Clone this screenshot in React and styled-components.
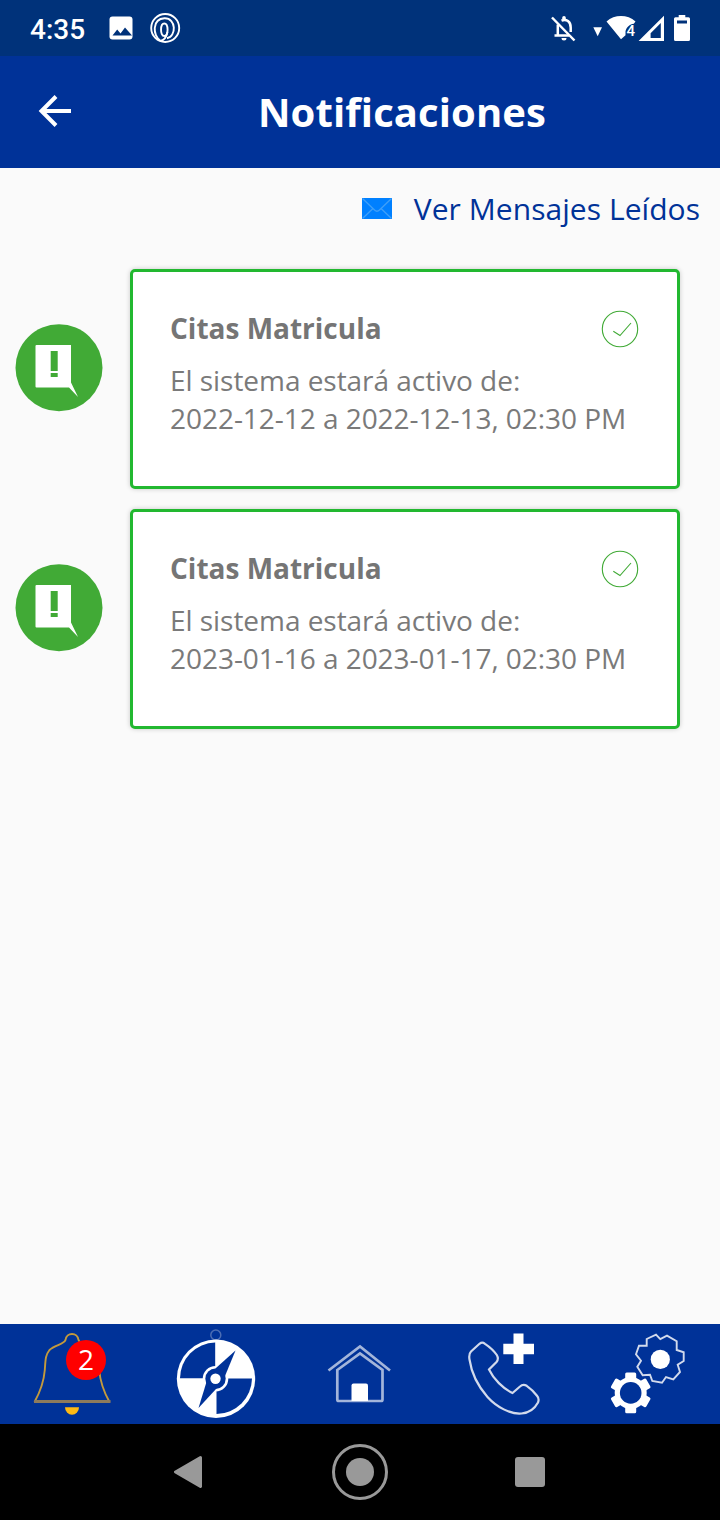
import React from "react";
import styled, { createGlobalStyle } from "styled-components";

const GlobalStyle = createGlobalStyle`
  * {
    box-sizing: border-box;
  }
  body {
    margin: 0;
    background: #fafafa;
    font-family: "Open Sans", "Noto Sans", sans-serif;
  }
  svg {
    display: block;
    flex-shrink: 0;
  }
`;

const Screen = styled.div`
  display: flex;
  flex-direction: column;
  width: 720px;
  height: 1520px;
  overflow: hidden;
  background: #fafafa;
`;

const StatusBar = styled.div`
  display: flex;
  align-items: center;
  justify-content: space-between;
  height: 56px;
  padding: 0 28px 0 30px;
  background: #00327a;
`;

const StatusGroup = styled.div`
  display: flex;
  align-items: center;
`;

const Clock = styled.span`
  width: 78px;
  padding-top: 4px;
  font-family: Roboto, sans-serif;
  font-size: 28px;
  font-weight: 500;
  line-height: 32px;
  color: #fff;
`;

const Header = styled.header`
  display: flex;
  align-items: center;
  height: 112px;
  background: #003298;
`;

const BackButton = styled.button`
  width: 84px;
  height: 112px;
  padding: 0;
  border: 0;
  background: none;
`;

const PageTitle = styled.h1`
  flex: 1;
  margin: 0;
  font-size: 40px;
  font-weight: 700;
  letter-spacing: 0.1px;
  line-height: 54px;
  text-align: center;
  color: #fff;
`;

const Content = styled.main`
  flex: 1;
`;

const ReadLink = styled.a`
  display: flex;
  align-items: center;
  justify-content: flex-end;
  gap: 22px;
  height: 81px;
  padding-right: 20px;
  font-size: 30px;
  letter-spacing: 0.05px;
  line-height: 40px;
  color: #003298;
`;

const MessageList = styled.div`
  display: flex;
  flex-direction: column;
  gap: 20px;
  padding: 20px 40px 0 15px;
`;

const MessageRow = styled.div`
  display: flex;
  align-items: center;
  height: 220px;
`;

const AlertSlot = styled.div`
  width: 115px;
  padding-bottom: 23px;
`;

const Card = styled.article`
  flex: 1;
  height: 220px;
  padding: 37px 38px 0 37px;
  border: 3px solid #22b830;
  border-radius: 5px;
  background: #fff;
  box-shadow: 0 0 5px rgba(0, 0, 0, 0.2);
`;

const CardHeader = styled.div`
  display: flex;
  align-items: center;
  justify-content: space-between;
  height: 40px;
  margin-bottom: 12px;
`;

const CardTitle = styled.h2`
  margin: 0;
  padding-bottom: 2px;
  font-size: 28px;
  font-weight: 700;
  line-height: 38px;
  color: #757575;
`;

const CardText = styled.p`
  margin: 0;
  font-size: 28px;
  letter-spacing: -0.04px;
  line-height: 38px;
  white-space: nowrap;
  color: #7a7a7a;
`;

const TabBar = styled.nav`
  display: grid;
  grid-template-columns: repeat(5, 144px);
  height: 100px;
  background: #003298;
`;

const Tab = styled.div`
  position: relative;
  height: 100px;
`;

const Badge = styled.span`
  position: absolute;
  top: 16px;
  left: 66px;
  width: 40px;
  height: 40px;
  border-radius: 50%;
  background: #f00;
  font-size: 28px;
  line-height: 38px;
  text-align: center;
  color: #fff;
`;

const SystemBar = styled.div`
  display: flex;
  align-items: center;
  justify-content: center;
  gap: 114px;
  height: 96px;
  background: #000;
`;

const messages = [
  { id: 1, title: "Citas Matricula", range: "2022-12-12 a 2022-12-13, 02:30 PM" },
  { id: 2, title: "Citas Matricula", range: "2023-01-16 a 2023-01-17, 02:30 PM" },
];

const StatusLeftIcons = () => (
  <svg width="80" height="56" viewBox="108 0 80 56" fill="none">
    <rect x="109.5" y="16.5" width="23" height="23" rx="3" fill="#fff" />
    <path d="M112.5 35.5l4.7-6 3.3 4 4.500-6 7 8z" fill="#00327a" />
    <g stroke="#fff" strokeWidth="1.900">
      <circle cx="165.200" cy="28" r="14" />
      <path d="M160 40.300C153 36 151.500 19 164.500 18.300c12-.3 12 18.200 2.500 20" />
      <path d="M164.300 23.500c4.200 0 4.500 12.500 0 12.500s-4.200-12.500 0-12.500z" />
      <path d="M167.500 32c-1 5-3.500 8.500-7.500 9" />
    </g>
  </svg>
);

const StatusRightIcons = () => (
  <svg width="144" height="56" viewBox="548 0 144 56">
    <g fill="none" stroke="#fff" strokeWidth="2.500">
      <path d="M552 17.500l22.500 23" />
      <path d="M557.800 24.500v11.200M554.500 35.500h14.500M561.500 20.700c5-2.200 9.200 1 9.200 6.800v4.500" />
    </g>
    <path d="M562.2 19v-1.300a1.800 1.800 0 0 1 3.600 0V19zM561.500 38h5a2.500 2.500 0 0 1-5 0z" fill="#fff" />
    <path d="M593.300 27.300h8.700l-4.300 9z" fill="#fff" />
    <path
      d="M606.500 21.500c8-7.200 21-7.200 29 0l-1.700 2.300c-4 0-7.500 4-8.300 7.500v4l-4.500 4z"
      fill="#fff"
    />
    <text x="626.500" y="36" fill="#fff" fontFamily="Roboto" fontSize="15" fontWeight="500">
      4
    </text>
    <path
      d="M638.600 41L664 15.800V41zM650.600 38h10.200V23L650.600 33.200z"
      fill="#fff"
      fillRule="evenodd"
    />
    <path
      d="M678.700 17.300V15h6.600v2.300h3.200q1.500 0 1.500 1.500v20.700q0 1.500-1.500 1.500h-13q-1.500 0-1.500-1.500V18.800q0-1.500 1.500-1.500zM677 20.500V23.500h10v-3z"
      fill="#fff"
      fillRule="evenodd"
    />
  </svg>
);

const ArrowIcon = () => (
  <svg width="84" height="112" viewBox="0 56 84 112" fill="none" stroke="#fff">
    <path d="M71 111H42" strokeWidth="4" />
    <path d="M56 96.500L41.500 111 56 125.500" strokeWidth="4" />
  </svg>
);

const EnvelopeIcon = () => (
  <svg width="30" height="21" viewBox="0 0 30 21">
    <rect width="30" height="21" fill="#0080ff" />
    <path
      d="M.5.500L12.500 12q2.500 2.500 5 0L29.500.500M.5 20.500l10.500-10M29.500 20.500L19 10.500"
      fill="none"
      stroke="#3f9ff8"
      strokeWidth="1.300"
    />
  </svg>
);

const AlertIcon = () => (
  <svg width="88" height="88" viewBox="15 324 88 88">
    <circle cx="59" cy="367.700" r="43.500" fill="#41aa36" />
    <path
      d="M36.500 345H71v37.500l7 14.500-9-9.500H36.500q-1 0-1-1V346q0-1 1-1z"
      fill="#fff"
    />
    <path d="M50.700 351h7v20h-7zM50.700 373h7v4h-7z" fill="#41aa36" />
  </svg>
);

const CheckIcon = () => (
  <svg width="38" height="38" viewBox="0 0 38 38" fill="none" stroke="#41aa36" strokeWidth="1.100">
    <circle cx="19" cy="19" r="17.700" />
    <path d="M12.300 21.300l6.700 4.200L30 13" />
  </svg>
);

const BellIcon = () => (
  <svg width="144" height="100" viewBox="0 0 144 100" fill="none">
    <path
      d="M34.500 78C39 70 43.800 58 44.800 46c.7-11 .7-15 4.700-20 5-5 14.500-5.500 16-10 .8-8 12.200-8 13 0 1.500 4.500 11 5 16 10 4 5 4 9 4.700 20 1 12 5.800 24 10.300 32"
      stroke="#c39a3c"
      strokeWidth="1.900"
    />
    <path d="M34 77.500h76.500" stroke="#8d7b5c" strokeWidth="3" />
    <path d="M65 83.300h14a7 7.500 0 0 1-14 0z" fill="#fdb913" />
  </svg>
);

const CompassIcon = () => (
  <svg width="144" height="100" viewBox="0 0 144 100">
    <circle cx="71.800" cy="11" r="5" fill="none" stroke="#4c6db3" strokeWidth="1.500" />
    <circle cx="72" cy="54.700" r="39.200" fill="#fff" />
    <g fill="#003298">
      <path d="M71.200 18.500V54.300H36A36 36 0 0 1 71.200 18.500z" />
      <path d="M72.500 54.500H108A36 36 0 0 1 72.500 90z" />
    </g>
    <circle cx="71.500" cy="54.800" r="12.800" fill="#fff" />
    <g fill="#003298">
      <path d="M91.500 26.500L81 52 72 65 54.500 84l8-26L72 44z" />
      <circle cx="71.500" cy="54.800" r="10.200" />
    </g>
    <circle cx="71.500" cy="54.800" r="5.200" fill="#fff" />
  </svg>
);

const HomeIcon = () => (
  <svg width="144" height="100" viewBox="0 0 144 100" fill="none" stroke="#a3b5da" strokeWidth="2.700">
    <path d="M40.500 46.500L72 22.500l30 24" />
    <path d="M49.300 46L72 29.500 94.500 46v29.500q0 1.500-1.500 1.500H50.800q-1.500 0-1.500-1.500z" />
    <path d="M63.500 77V61.500q0-2 2-2H78q2 0 2 2V77z" fill="#fff" stroke="none" />
  </svg>
);

const PhoneIcon = () => (
  <svg width="144" height="100" viewBox="0 0 144 100">
    <path
      d="M53 19.800c-2-1.600-3.500-1.600-5.500 0L39 27.500c-2 2-2 5-1.500 8 2 14 7.500 25.500 18 37.500 9 10 23 17.500 34 16.500 7-.5 13-4.500 16.500-11 1-2.500.8-4.500-.8-6.500-3-4-6.500-7.500-10.500-10.200-2.500-1.500-4.700-1.200-6.700.7L80.500 69c-9.500-4.500-19-14-23.500-23.500l7.500-7.500c1.700-2 1.700-4.500.3-7-3-4.500-7-8-11.800-11.200z"
      fill="none"
      stroke="#d2daec"
      strokeWidth="2.200"
    />
    <path d="M81.500 9.500h10v10.300H102v10.400H91.500V40h-10v-9.800H71.300V19.800h10.200z" fill="#fff" />
  </svg>
);

const GearsIcon = () => (
  <svg width="144" height="100" viewBox="0 0 144 100">
    <path
      d="M70.700 15l9.300-4.300 4.300 4.500 6.700-3.500 9.700 5.600v8.700l7 2.300v8.700l-6 3.700 2.300 7.300-6.700 7.300-7.300-2.300-4 5.700-9.700-1.700-2.300-6.300-7.300.6-5.400-8.600 3.700-6-5-6.400 3-8.600h7.700z"
      fill="none"
      stroke="#d2daec"
      strokeWidth="1.900"
    />
    <circle cx="84.300" cy="35.400" r="9.600" fill="#fff" />
    <g transform="translate(54.700 68.900)">
      <g fill="#fff">
        {[0, 60, 120].map((angle) => (
          <rect
            key={angle}
            x="-5.500"
            y="-20.300"
            width="11"
            height="40.600"
            rx="1.500"
            transform={`rotate(${angle})`}
          />
        ))}
        <circle r="16" />
      </g>
      <circle r="10.800" fill="#003298" />
    </g>
  </svg>
);

const NavBackIcon = () => (
  <svg width="44" height="56" viewBox="0 0 44 56">
    <path
      d="M26.500 13.500L1.500 28l25 14.500z"
      fill="#999"
      stroke="#999"
      strokeWidth="3"
      strokeLinejoin="round"
    />
  </svg>
);

const NavHomeIcon = () => (
  <svg width="56" height="56" viewBox="0 0 56 56">
    <circle cx="28" cy="28" r="26.500" fill="none" stroke="#999" strokeWidth="3" />
    <circle cx="28" cy="28" r="14" fill="#999" />
  </svg>
);

const NavRecentsIcon = () => (
  <svg width="44" height="56" viewBox="0 0 44 56">
    <rect x="13" y="13" width="30" height="30" rx="3" fill="#999" />
  </svg>
);

const Message = ({ message }) => (
  <MessageRow>
    <AlertSlot>
      <AlertIcon />
    </AlertSlot>
    <Card>
      <CardHeader>
        <CardTitle>{message.title}</CardTitle>
        <CheckIcon />
      </CardHeader>
      <CardText>El sistema estará activo de:</CardText>
      <CardText>{message.range}</CardText>
    </Card>
  </MessageRow>
);

const App = () => (
  <>
    <GlobalStyle />
    <Screen>
      <StatusBar>
        <StatusGroup>
          <Clock>4:35</Clock>
          <StatusLeftIcons />
        </StatusGroup>
        <StatusRightIcons />
      </StatusBar>
      <Header>
        <BackButton aria-label="Volver">
          <ArrowIcon />
        </BackButton>
        <PageTitle>Notificaciones</PageTitle>
      </Header>
      <Content>
        <ReadLink>
          <EnvelopeIcon />
          Ver Mensajes Leídos
        </ReadLink>
        <MessageList>
          {messages.map((m) => (
            <Message key={m.id} message={m} />
          ))}
        </MessageList>
      </Content>
      <TabBar>
        <Tab>
          <BellIcon />
          <Badge>2</Badge>
        </Tab>
        <Tab>
          <CompassIcon />
        </Tab>
        <Tab>
          <HomeIcon />
        </Tab>
        <Tab>
          <PhoneIcon />
        </Tab>
        <Tab>
          <GearsIcon />
        </Tab>
      </TabBar>
      <SystemBar>
        <NavBackIcon />
        <NavHomeIcon />
        <NavRecentsIcon />
      </SystemBar>
    </Screen>
  </>
);

export default App;
